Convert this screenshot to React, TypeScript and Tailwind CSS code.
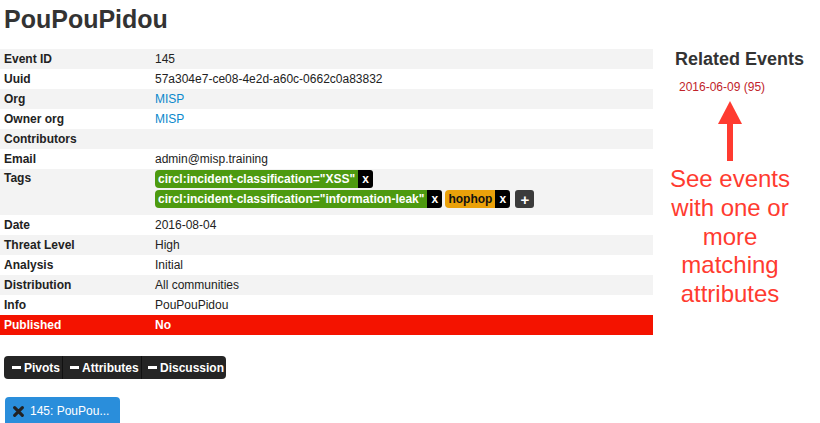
import React from "react";

const ROWS: { label: string; value: React.ReactNode; gray?: boolean }[] = [
  { label: "Event ID", value: "145", gray: true },
  { label: "Uuid", value: "57a304e7-ce08-4e2d-a60c-0662c0a83832" },
  { label: "Org", value: <span className="text-[#0a88cc]">MISP</span>, gray: true },
  { label: "Owner org", value: <span className="text-[#0a88cc]">MISP</span> },
  { label: "Contributors", value: "", gray: true },
  { label: "Email", value: "admin@misp.training" },
];

const ROWS_AFTER: { label: string; value: string; gray?: boolean }[] = [
  { label: "Date", value: "2016-08-04" },
  { label: "Threat Level", value: "High", gray: true },
  { label: "Analysis", value: "Initial" },
  { label: "Distribution", value: "All communities", gray: true },
  { label: "Info", value: "PouPouPidou" },
];

function Row({ label, value, gray }: { label: string; value: React.ReactNode; gray?: boolean }) {
  return (
    <div className={`flex h-[20px] items-center leading-[20px] ${gray ? "bg-[#f3f3f3]" : ""}`}>
      <div className="w-[151px] pl-[4px] font-bold text-[#222]">{label}</div>
      <div className="pl-[4px] text-[#222]">{value}</div>
    </div>
  );
}

function Tag({ text, color, dark }: { text: string; color: string; dark?: boolean }) {
  return (
    <span className="flex h-[18px] items-stretch">
      <span
        className={`flex items-center rounded-l-[4px] px-[3px] font-bold leading-none ${dark ? "text-[#111]" : "text-white"}`}
        style={{ backgroundColor: color }}
      >
        {text}
      </span>
      <span className="flex w-[15px] items-center justify-center rounded-r-[3px] bg-black font-bold leading-none text-white">x</span>
    </span>
  );
}

function Minus() {
  return <span className="mr-[3px] inline-block h-[3px] w-[9px] shrink-0 bg-white" />;
}

export default function App() {
  return (
    <div className="flex h-[423px] w-[820px] overflow-hidden bg-white text-[12px]" style={{ fontFamily: '"Liberation Sans", Arial, sans-serif' }}>
      <div className="w-[653px] shrink-0">
        <h1 className="h-[49px] pl-[4px] pt-[4px] text-[25px] font-bold leading-[30px] text-[#333]">PouPouPidou</h1>

        <div>
          {ROWS.map((r) => (
            <Row key={r.label} {...r} />
          ))}
          <div className="flex h-[46px] bg-[#f3f3f3]">
            <div className="w-[151px] pl-[4px] font-bold leading-[18px] text-[#222]">Tags</div>
            <div className="flex flex-col gap-[2px] pl-[4px] pt-[1px]">
              <div className="flex">
                <Tag text={'circl:incident-classification="XSS"'} color="#4d9a10" />
              </div>
              <div className="flex items-center gap-[3px]">
                <Tag text={'circl:incident-classification="information-leak"'} color="#4d9a10" />
                <Tag text="hophop" color="#eaa10a" dark />
                <span className="ml-[2px] flex h-[18px] w-[19px] items-center justify-center rounded-[3px] bg-[#3b3b3b] text-[15px] font-bold leading-none text-white">+</span>
              </div>
            </div>
          </div>
          {ROWS_AFTER.map((r) => (
            <Row key={r.label} {...r} />
          ))}
          <div className="flex h-[20px] items-center bg-[#f41300] font-bold leading-[20px] text-white">
            <div className="w-[151px] pl-[4px]">Published</div>
            <div className="pl-[4px]">No</div>
          </div>
        </div>

        <div className="ml-[4px] mt-[21px] flex h-[23px] w-[222px] overflow-hidden rounded-[4px] bg-[#252525] font-bold text-white">
          <div className="flex w-[59px] items-center border-r border-[#111] pl-[8px]">
            <Minus />
            Pivots
          </div>
          <div className="flex w-[79px] items-center border-r border-[#111] pl-[7px]">
            <Minus />
            Attributes
          </div>
          <div className="flex w-[84px] items-center pl-[6px]">
            <Minus />
            Discussion
          </div>
        </div>

        <div className="ml-[5px] mt-[18px] flex h-[30px] w-[115px] items-start rounded-[4px] bg-[#2a8edb] pl-[8px] pt-[7px] text-white">
          <svg width="11" height="11" viewBox="0 0 10 10" className="mr-[6px] mt-[2px]">
            <path d="M1.5 1.5 L8.5 8.5 M8.5 1.5 L1.5 8.5" stroke="#222" strokeWidth="2.8" strokeLinecap="round" />
          </svg>
          <span className="leading-[14px]">145: PouPou...</span>
        </div>
      </div>

      <div className="flex-1 pt-[48px]">
        <h2 className="pl-[22px] text-[18px] font-bold leading-[22px] text-[#333]">Related Events</h2>
        <div className="mt-[9px] pl-[26px] leading-[16px] text-[#c1232a]">2016-06-09 (95)</div>
        <div className="flex w-[154px] flex-col items-center">
          <svg width="24" height="60" viewBox="0 0 24 60" className="mt-[6px]">
            <polygon points="12,0 24,23 0,23" fill="#ff3b30" />
            <rect x="9" y="22" width="6" height="38" fill="#ff3b30" />
          </svg>
          <div className="mt-[4px] text-center text-[24px] leading-[28.75px] text-[#ff3b30]">
            See events
            <br />
            with one or
            <br />
            more
            <br />
            matching
            <br />
            attributes
          </div>
        </div>
      </div>
    </div>
  );
}
